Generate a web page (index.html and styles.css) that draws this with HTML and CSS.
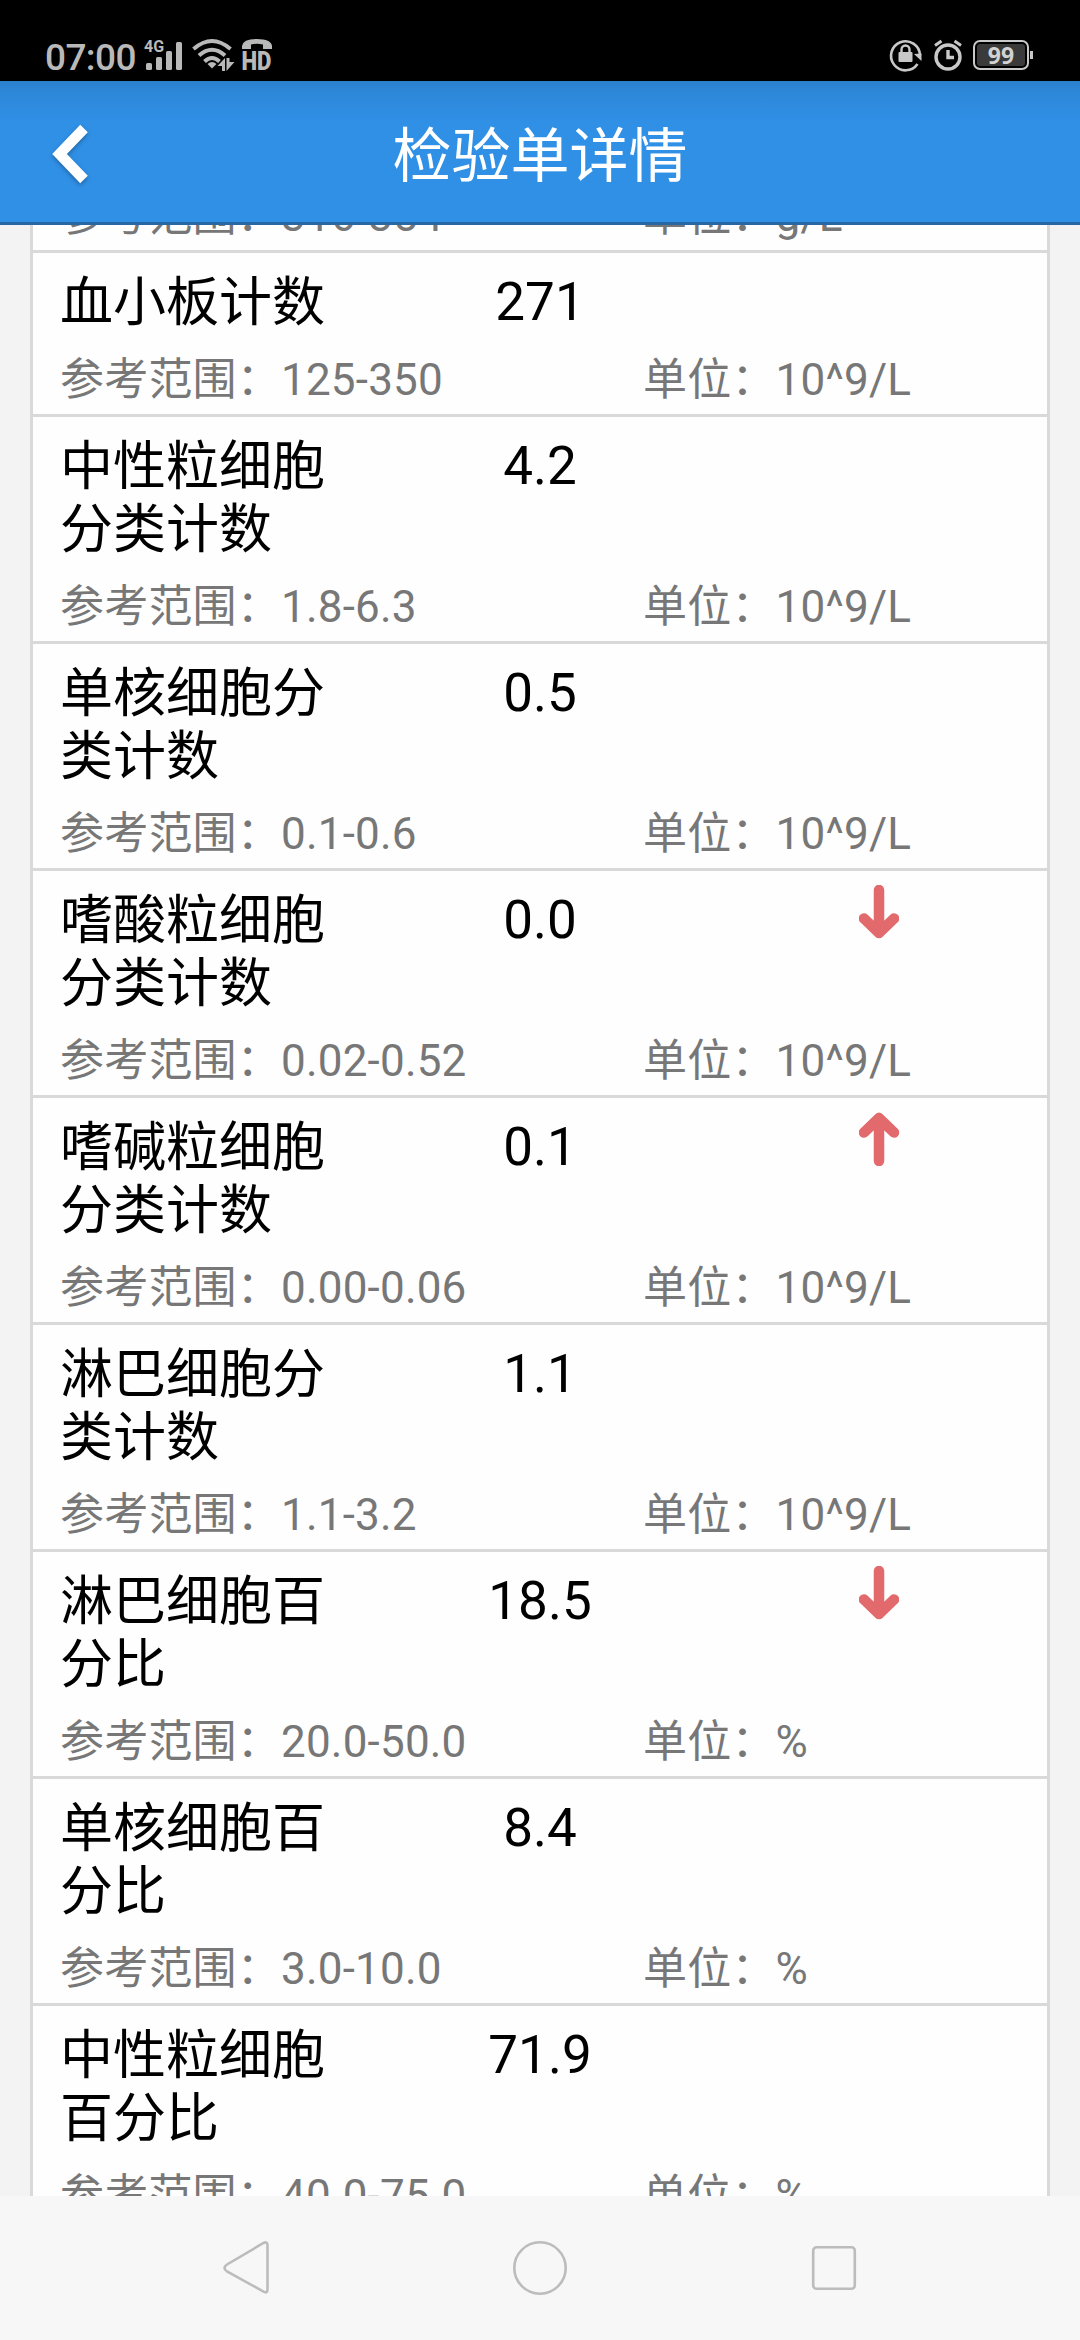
FILE: index.html
```html
<!DOCTYPE html>
<html lang="zh-CN">
<head>
    <meta charset="UTF-8">
    <meta name="viewport" content="width=device-width, initial-scale=1.0">
    <title>检验单详情</title>
    <link rel="stylesheet" href="styles.css">
</head>
<body>

    <!-- arrow used by the abnormal rows, flipped in css for "low" -->
    <svg class="defs" width="0" height="0">
        <symbol id="arrow" viewBox="0 0 40 54">
            <path d="M20 49V6M5 20.5L20 6L35 20.5" fill="none" stroke="#e26a6c" stroke-width="10.500" stroke-linecap="round" stroke-linejoin="round"/>
        </symbol>
    </svg>

    <div class="status-bar">
        <div class="status-left">
            <span class="clock">07:00</span>
            <svg class="icon-signal" width="42" height="32" viewBox="0 0 42 32">
                <text x="0" y="13" font-size="16">4G</text>
                <rect x="2" y="24" width="6" height="7" rx="1.5"/>
                <rect x="12" y="18" width="6" height="13" rx="1.5"/>
                <rect x="22" y="12" width="6" height="19" rx="1.5"/>
                <rect x="32" y="3" width="6" height="28" rx="1.5"/>
            </svg>
            <svg class="icon-wifi" width="44" height="32" viewBox="0 0 44 32">
                <path d="M1.5 11Q20 -5 38.5 11M7 17.5Q20 6 33 17.5M12.5 23.5Q20 16.5 27.5 23.5" fill="none" stroke="#b9b9b9" stroke-width="4"/>
                <path d="M15.5 26Q20 22 24.5 26L20 30.5Z"/>
                <path d="M33 20V33H30V28H25.500Z"/>
                <path d="M34.500 20V33L42.500 24H37.500V20Z"/>
            </svg>
            <svg class="icon-hd" width="32" height="34" viewBox="0 0 32 34">
                <path d="M1 11V8Q2 1 16 1T31 8V11H22V6.500Q16 5 10 6.500V11Z"/>
                <text x="0.5" y="32" font-size="25.500" textLength="30" lengthAdjust="spacingAndGlyphs">HD</text>
            </svg>
        </div>
        <div class="status-right">
            <svg width="34" height="34" viewBox="0 0 34 34">
                <path d="M28.500 26A14.500 14.500 0 1 1 31 17" fill="none" stroke="#c8c8c8" stroke-width="2.600"/>
                <path d="M25 16L32.500 23V15.500Z"/>
                <rect x="9.500" y="14" width="14" height="10" rx="1"/>
                <path d="M12.500 14V11.500A4 4 0 0 1 20.500 11.500V14" fill="none" stroke="#c8c8c8" stroke-width="2.400"/>
            </svg>
            <svg width="32" height="34" viewBox="0 0 32 34">
                <circle cx="16" cy="19" r="12" fill="none" stroke="#c8c8c8" stroke-width="3.400"/>
                <path d="M16 12V19.500H22" fill="none" stroke="#c8c8c8" stroke-width="3.400"/>
                <path d="M3 7.500L9.500 3M29 7.500L22.500 3" stroke="#c8c8c8" stroke-width="3"/>
            </svg>
            <div class="battery"><span class="battery-level">99</span></div>
        </div>
    </div>

    <header class="title-bar">
        <svg class="back" width="40" height="64" viewBox="0 0 40 64">
            <path d="M36 4.500L11.500 30L36 55.500" fill="none" stroke="#fff" stroke-width="10.500"/>
        </svg>
        <h1>检验单详情</h1>
    </header>

    <main class="content">
        <div class="result-list">
            <div class="result cut">
                <div class="info"><span>参考范围：316-354</span><span>单位：g/L</span></div>
            </div>
            <div class="result">
                <div class="main-row">
                    <span class="name">血小板计数</span>
                    <span class="value">271</span>
                </div>
                <div class="info"><span>参考范围：125-350</span><span>单位：10^9/L</span></div>
            </div>
            <div class="result">
                <div class="main-row">
                    <span class="name">中性粒细胞分类计数</span>
                    <span class="value">4.2</span>
                </div>
                <div class="info"><span>参考范围：1.8-6.3</span><span>单位：10^9/L</span></div>
            </div>
            <div class="result">
                <div class="main-row">
                    <span class="name">单核细胞分类计数</span>
                    <span class="value">0.5</span>
                </div>
                <div class="info"><span>参考范围：0.1-0.6</span><span>单位：10^9/L</span></div>
            </div>
            <div class="result">
                <div class="main-row">
                    <span class="name">嗜酸粒细胞分类计数</span>
                    <span class="value">0.0</span>
                    <svg class="flag low"><use href="#arrow"/></svg>
                </div>
                <div class="info"><span>参考范围：0.02-0.52</span><span>单位：10^9/L</span></div>
            </div>
            <div class="result">
                <div class="main-row">
                    <span class="name">嗜碱粒细胞分类计数</span>
                    <span class="value">0.1</span>
                    <svg class="flag"><use href="#arrow"/></svg>
                </div>
                <div class="info"><span>参考范围：0.00-0.06</span><span>单位：10^9/L</span></div>
            </div>
            <div class="result">
                <div class="main-row">
                    <span class="name">淋巴细胞分类计数</span>
                    <span class="value">1.1</span>
                </div>
                <div class="info"><span>参考范围：1.1-3.2</span><span>单位：10^9/L</span></div>
            </div>
            <div class="result">
                <div class="main-row">
                    <span class="name">淋巴细胞百分比</span>
                    <span class="value">18.5</span>
                    <svg class="flag low"><use href="#arrow"/></svg>
                </div>
                <div class="info"><span>参考范围：20.0-50.0</span><span>单位：%</span></div>
            </div>
            <div class="result">
                <div class="main-row">
                    <span class="name">单核细胞百分比</span>
                    <span class="value">8.4</span>
                </div>
                <div class="info"><span>参考范围：3.0-10.0</span><span>单位：%</span></div>
            </div>
            <div class="result">
                <div class="main-row">
                    <span class="name">中性粒细胞百分比</span>
                    <span class="value">71.9</span>
                </div>
                <div class="info"><span>参考范围：40.0-75.0</span><span>单位：%</span></div>
            </div>
        </div>
    </main>

    <nav class="nav-bar">
        <svg width="60" height="60" viewBox="0 0 60 60">
            <path d="M51.500 6.500V51Q51.500 56 47.500 53.500L11 33.500Q6 30 11 26.500L47.500 5Q51.500 3 51.500 7.500Z"/>
        </svg>
        <svg width="60" height="60" viewBox="0 0 60 60"><circle cx="30" cy="30" r="25.700"/></svg>
        <svg width="60" height="60" viewBox="0 0 60 60"><rect x="9.200" y="9.200" width="41.600" height="41.600" rx="3.500"/></svg>
    </nav>

</body>
</html>
```

FILE: styles.css
```css
:root {
    --blue: #3090e6;
    --line: #d9d9d9;
    --page-bg: #f3f3f3;
    --muted: #777;
    --status-color: #b9b9b9;
}

* { margin: 0; padding: 0; box-sizing: border-box; }

body {
    width: 1080px;
    height: 2340px;
    display: flex;
    flex-direction: column;
    overflow: hidden;
    background: var(--page-bg);
    font-family: Roboto, "Noto Sans CJK SC", sans-serif;
}

.defs { position: absolute; }

/* --- status bar --- */
.status-bar {
    height: 81px;
    flex-shrink: 0;
    padding: 28px 51px 0 45px;
    display: flex;
    justify-content: space-between;
    background: #000;
    color: var(--status-color);
}
.status-left, .status-right { display: flex; align-items: center; height: 56px; }
.status-left { height: 58px; }
.clock { width: 99px; font-size: 37px; font-weight: 500; letter-spacing: -0.6px; }
.status-left svg, .status-right svg { fill: var(--status-color); overflow: visible; }
.icon-signal { margin-bottom: 4px; }
.icon-signal text { font-weight: 700; }
.icon-wifi { margin-left: 6px; margin-bottom: 6px; }
.icon-hd { margin-left: 5px; margin-bottom: 5px; }
.icon-hd text { font-weight: 900; }
.status-right { gap: 9px; height: 54px; }
.status-right svg { fill: #c8c8c8; }
.battery {
    position: relative;
    width: 56px;
    height: 30px;
    padding: 2px;
    border: 2px solid #c8c8c8;
    border-radius: 7px;
}
.battery::after {
    content: "";
    position: absolute;
    right: -6px;
    top: 9px;
    width: 3px;
    height: 8px;
    background: #c8c8c8;
}
.battery-level {
    display: block;
    height: 22px;
    border-radius: 3px;
    background: #3a3a3a;
    color: #d2d2d2;
    font: 700 23px/22px "Noto Sans", sans-serif;
    text-align: center;
}

/* --- title bar --- */
.title-bar {
    height: 144px;
    flex-shrink: 0;
    padding: 10px 48px 0;
    display: grid;
    grid-template-columns: 40px 1fr 40px;
    align-items: center;
    background: linear-gradient(#2a80cc, #2d87d8 10px, var(--blue) 42px);
    border-bottom: 3px solid #2768a4;
    color: #fff;
}
.title-bar h1 { font-size: 59px; font-weight: 400; line-height: 70px; text-align: center; }
.back { margin-bottom: 2px; overflow: visible; filter: drop-shadow(0 2px 2px rgba(0, 0, 0, 0.3)); }

/* --- results --- */
.content { flex: 1; min-height: 0; overflow: hidden; padding: 0 30px; }
.result-list {
    margin-top: -51px;
    background: #fefefe;
    border: 3px solid var(--line);
}
.result { padding: 19px 27px 8px; border-bottom: 3px solid var(--line); }
.result.cut { padding-top: 13px; }
.main-row {
    display: grid;
    grid-template-columns: 312px 336px 1fr;
    min-height: 63px;
    margin-bottom: 19px;
    color: #000;
    font-size: 53px;
    line-height: 63px;
}
.name { width: 270px; }
.value { margin-top: -1px; text-align: center; }
.flag { width: 40px; height: 54px; margin: -5px 0 0 151px; }
.flag.low { transform: scaleY(-1); }
.info {
    display: grid;
    grid-template-columns: 583px 1fr;
    color: var(--muted);
    font-size: 44px;
    line-height: 52px;
    letter-spacing: 0.2px;
}

/* --- bottom navigation --- */
.nav-bar {
    height: 144px;
    flex-shrink: 0;
    padding: 0 216px;
    display: flex;
    justify-content: space-between;
    align-items: center;
    background: #f7f7f7;
}
.nav-bar svg { fill: none; stroke: #bcbcbc; stroke-width: 2.6; }
```
